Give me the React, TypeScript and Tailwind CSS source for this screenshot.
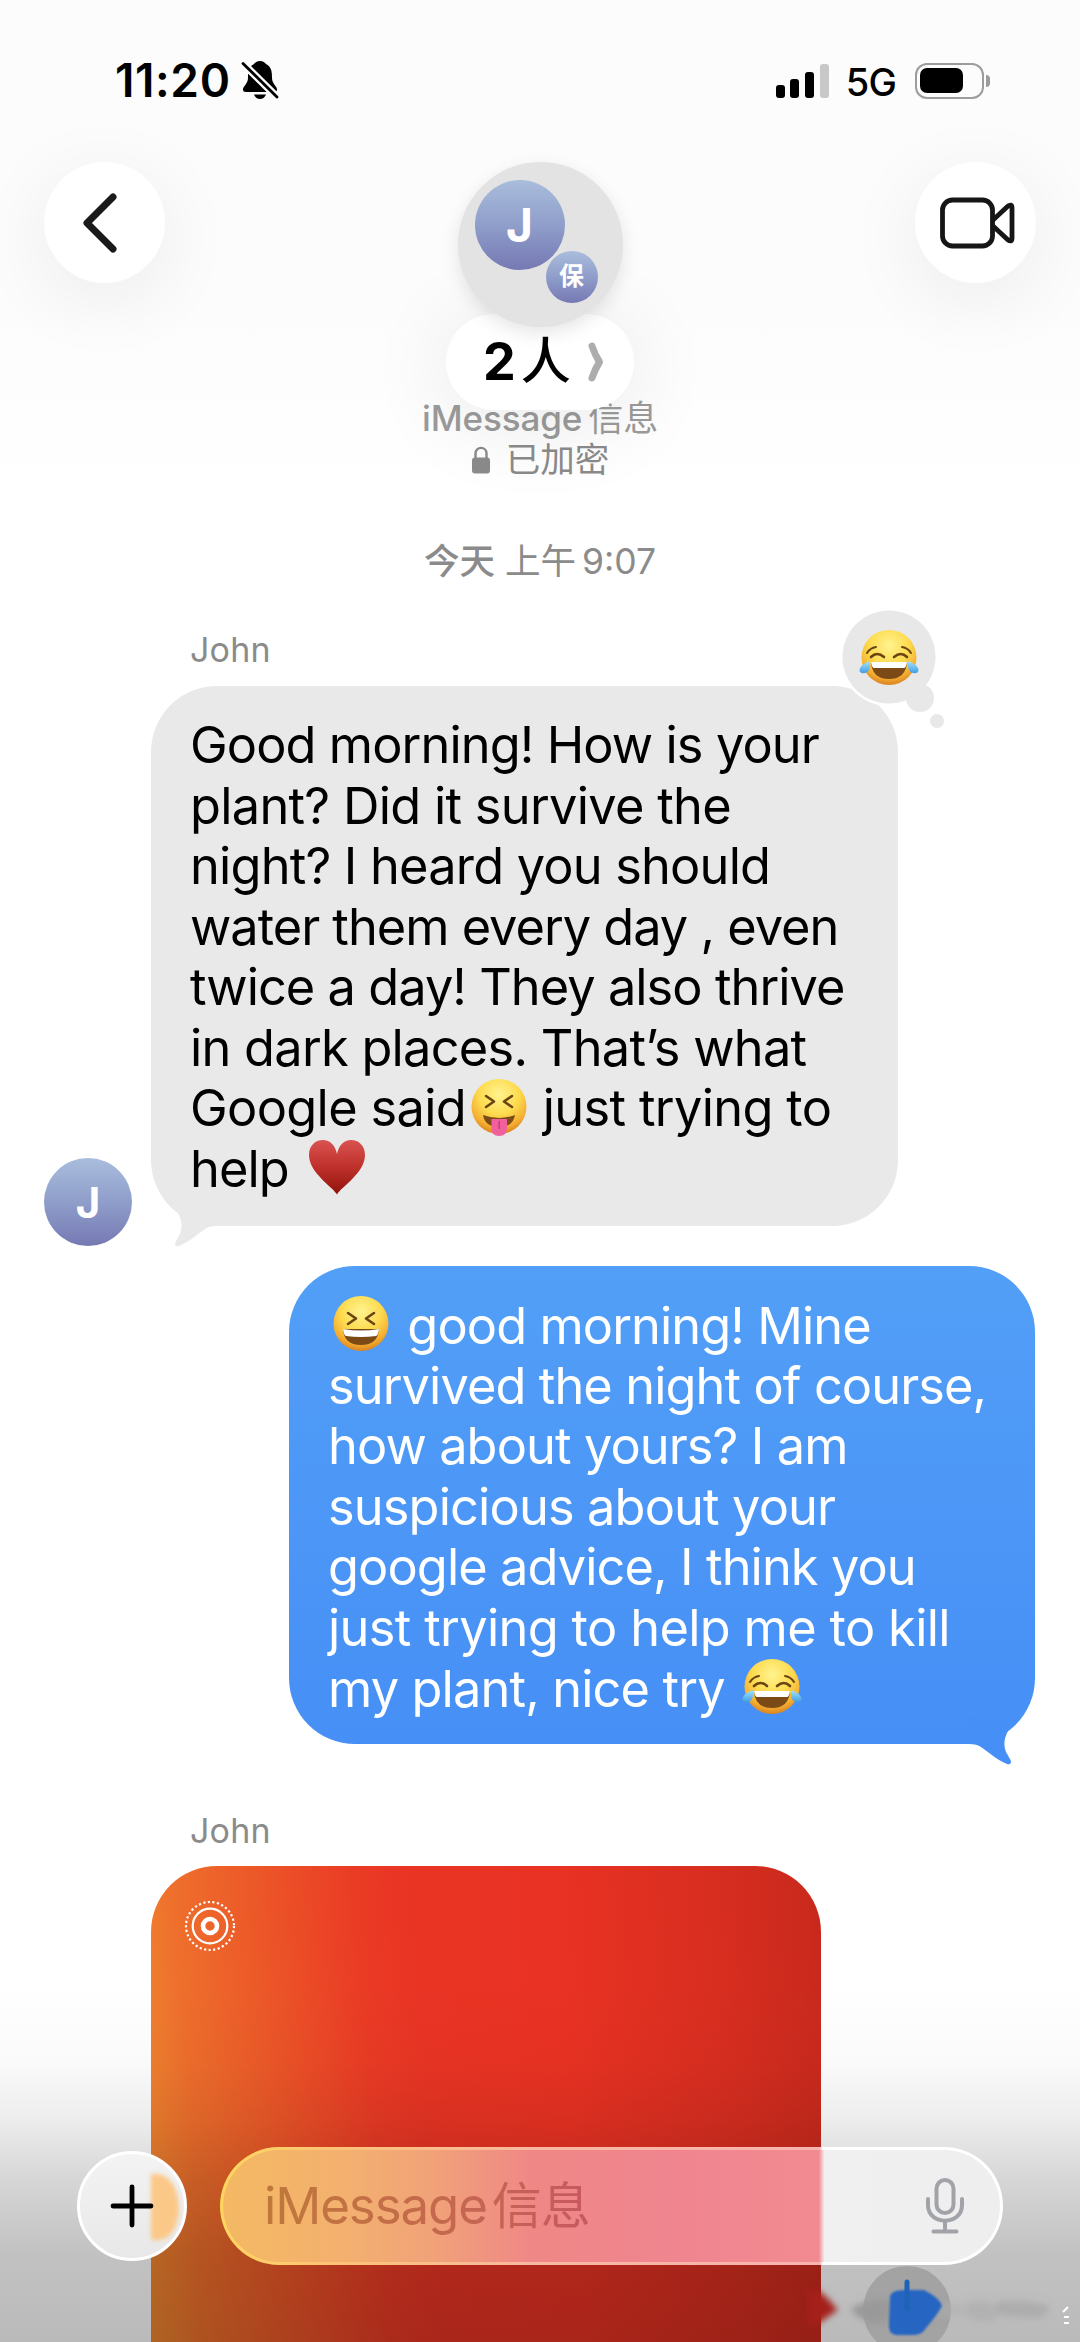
import React, { useId } from "react";

type EmojiKind = "joy" | "tongue" | "laugh";

interface Line {
  tracking: string;
  content: React.ReactNode;
}

const Face: React.FC<{ kind: EmojiKind; className?: string }> = ({
  kind,
  className = "",
}) => {
  const id = useId();
  return (
    <svg viewBox="0 0 60 58" className={className} aria-label={kind}>
      <defs>
        <radialGradient id={id} cx="50%" cy="28%" r="72%">
          <stop offset="0" stopColor="#fff38f" />
          <stop offset="0.5" stopColor="#fddb4f" />
          <stop offset="0.82" stopColor="#f4ae31" />
          <stop offset="1" stopColor="#db8320" />
        </radialGradient>
        <linearGradient id={id + "t"} x1="0" y1="0" x2="0" y2="1">
          <stop offset="0" stopColor="#a5e2fb" />
          <stop offset="1" stopColor="#3e9fe4" />
        </linearGradient>
      </defs>
      <circle cx="30" cy="28.5" r="27.5" fill={`url(#${id})`} />
      {kind === "joy" ? (
        <>
          <g fill="none" stroke="#6b4413" strokeLinecap="round">
            <path d="M8 24 Q11 19 17 18" strokeWidth="2" />
            <path d="M52 24 Q49 19 43 18" strokeWidth="2" />
            <path d="M12 28 Q18 22 25 28" strokeWidth="2.6" />
            <path d="M35 28 Q42 22 48 28" strokeWidth="2.6" />
          </g>
          <path d="M12 33 H48 Q47 50 30 50 Q13 50 12 33Z" fill="#7b4a16" />
          <path d="M12 33 H48 Q47 39 45 39 H15 Q13 39 12 33Z" fill="#fff" />
          <path
            d="M11 32 Q12 43 6 44 Q-1 45 1 39 Q3 35 11 32Z"
            fill={`url(#${id}t)`}
          />
          <path
            d="M49 32 Q48 43 54 44 Q61 45 59 39 Q57 35 49 32Z"
            fill={`url(#${id}t)`}
          />
        </>
      ) : (
        <g fill="none" stroke="#6b4413" strokeWidth="2.6" strokeLinecap="round" strokeLinejoin="round">
          <path d="M17 18 L25 23.5 L17 29" />
          <path d="M43 18 L35 23.5 L43 29" />
        </g>
      )}
      {kind === "laugh" && (
        <>
          <path d="M12 34 H48 Q47 50 30 50 Q13 50 12 34Z" fill="#7b4a16" />
          <path d="M12 34 Q30 37 48 34 Q47 41 45 41 Q30 43 15 41 Q13 41 12 34Z" fill="#fff" />
        </>
      )}
      {kind === "tongue" && (
        <>
          <path d="M14 37 Q30 43 46 37 Q44 49 30 49 Q16 49 14 37Z" fill="#7b4a16" />
          <path d="M22.500 41 H38 V50 Q38 58 30 58 Q22.500 58 22.500 50Z" fill="#f0609c" />
          <path d="M30.200 43 V51" stroke="#cd3f7c" strokeWidth="1.600" />
        </>
      )}
    </svg>
  );
};

const Heart = () => (
  <svg
    viewBox="0 0 58 56"
    className="inline-block w-[58px] h-[56px] align-[-8px] ml-[6px]"
  >
    <defs>
      <linearGradient id="heart" x1="0" y1="0" x2="0" y2="1">
        <stop offset="0" stopColor="#d95350" />
        <stop offset="0.5" stopColor="#bf302b" />
        <stop offset="1" stopColor="#8f140c" />
      </linearGradient>
    </defs>
    <path
      d="M29 55.500 C25 48 1 34 1 16 C1 7 7 1 15 1 C22 1 27 6 29 15 C31 6 36 1 43 1 C51 1 57 7 57 16 C57 34 33 48 29 55.500Z"
      fill="url(#heart)"
    />
  </svg>
);

const incoming: Line[] = [
  { tracking: "tracking-[-0.9px]", content: "Good morning! How is your" },
  { tracking: "tracking-[-0.7px]", content: "plant? Did it survive the" },
  { tracking: "tracking-[-0.8px]", content: "night? I heard you should" },
  { tracking: "tracking-[-1px]", content: "water them every day , even" },
  { tracking: "tracking-[-0.95px]", content: "twice a day! They also thrive" },
  { tracking: "tracking-[-0.73px]", content: "in dark places. That’s what" },
  {
    tracking: "tracking-[-0.65px]",
    content: (
      <>
        Google said
        <Face
          kind="tongue"
          className="inline-block w-[60px] h-[58px] align-[-10px] ml-[3px]"
        />{" "}
        just trying to
      </>
    ),
  },
  {
    tracking: "tracking-[-0.9px]",
    content: (
      <>
        help <Heart />
      </>
    ),
  },
];

const outgoing: Line[] = [
  {
    tracking: "tracking-[-0.9px]",
    content: (
      <>
        <Face
          kind="laugh"
          className="inline-block w-[60px] h-[58px] align-[-9px] ml-[3px] mr-[3px]"
        />{" "}
        good morning! Mine
      </>
    ),
  },
  { tracking: "tracking-[-0.9px]", content: "survived the night of course," },
  { tracking: "tracking-[-0.9px]", content: "how about yours? I am" },
  { tracking: "tracking-[-0.85px]", content: "suspicious about your" },
  { tracking: "tracking-[-0.9px]", content: "google advice, I think you" },
  { tracking: "tracking-[-0.65px]", content: "just trying to help me to kill" },
  {
    tracking: "tracking-[-0.85px]",
    content: (
      <>
        my plant, nice try{" "}
        <Face
          kind="joy"
          className="inline-block w-[60px] h-[58px] align-[-9px] ml-[4px]"
        />
      </>
    ),
  },
];

const Lines: React.FC<{ lines: Line[] }> = ({ lines }) => (
  <>
    {lines.map((line, i) => (
      <p
        key={i}
        className={`h-[60.5px] leading-[60.5px] text-[50.5px] whitespace-nowrap ${line.tracking}`}
      >
        {line.content}
      </p>
    ))}
  </>
);

const Tail: React.FC<{ className: string }> = ({ className }) => (
  <svg viewBox="0 0 70 70" className={className}>
    <path
      d="M22 26 C29 34 33 44 29 54 L24.500 62 C23 65 25 67 28 66 C38 62 48 53 54 49 Q58 46 66 46 L66 20Z"
      fill="currentColor"
    />
  </svg>
);

const Avatar: React.FC<{ className: string; children: React.ReactNode }> = ({
  className,
  children,
}) => (
  <div
    className={`flex items-center justify-center rounded-full bg-linear-to-b from-[#a9bddc] via-[#8f9eca] to-[#7679b3] text-white font-bold ${className}`}
  >
    {children}
  </div>
);

const StatusBar = () => (
  <div className="flex h-[162px] pl-[115px] pr-[90px] pt-[60px] items-start justify-between">
    <div className="flex items-center h-[41px]">
      <span className="text-[46px] font-semibold tracking-[0.6px] leading-[41px]">
        11:20
      </span>
      <svg viewBox="0 0 38 40" className="w-[38px] h-[40px] ml-[10px] -mt-px">
        <path
          d="M19 1 C22 1 24 2.500 25 4 C31 7 31 13 31 18 C31 24 36 26 36 29.500 Q36 32 33 32 H5 Q2 32 2 29.500 C2 26 7 24 7 18 C7 13 7 7 13 4 C14 2.500 16 1 19 1Z"
          fill="#000"
        />
        <path d="M13 34.500 H25 Q23 39 19 39 Q15 39 13 34.500Z" fill="#000" />
        <path d="M0 1.500 L38 39" stroke="#fcfcfc" strokeWidth="7.500" />
        <path d="M2 3.500 L36 37" stroke="#000" strokeWidth="2.800" strokeLinecap="round" />
      </svg>
    </div>
    <div className="flex items-center h-[41px]">
      <div className="flex items-end gap-[5.7px] h-[34px]">
        <span className="w-[9px] h-[13px] rounded-[3px] bg-black" />
        <span className="w-[9px] h-[19px] rounded-[3px] bg-black" />
        <span className="w-[9px] h-[26px] rounded-[3px] bg-black" />
        <span className="w-[9px] h-[34px] rounded-[3px] bg-[#c8c8c8]" />
      </div>
      <span className="ml-[17px] text-[38px] font-medium tracking-[-0.8px] leading-[41px] mt-[3px]">
        5G
      </span>
      <div className="ml-[19px] w-[69px] h-[36px] rounded-[12px] border-[2.5px] border-[#9c9c9c] p-[3px]">
        <div className="w-[43px] h-[25px] rounded-[7px] bg-black" />
      </div>
      <div className="ml-[2px] w-[4px] h-[12px] rounded-r-full bg-[#9c9c9c]" />
    </div>
  </div>
);

const roundButton =
  "flex items-center justify-center w-[121px] h-[121px] rounded-full bg-white shadow-[0_16px_80px_rgba(0,0,0,0.07)]";

const Header = () => (
  <div className="flex items-start justify-between px-[44px] h-[248px]">
    <button className={roundButton}>
      <svg viewBox="0 0 40 64" className="w-[40px] h-[64px] -ml-[10px]">
        <path
          d="M33 6 L7 32 L33 58"
          fill="none"
          stroke="#1a1a1a"
          strokeWidth="7"
          strokeLinecap="round"
          strokeLinejoin="round"
        />
      </svg>
    </button>

    <div className="relative z-10 flex flex-col items-center">
      <div className="relative z-10 w-[165px] h-[165px] rounded-full bg-[#e3e3e3] shadow-[0_6px_18px_rgba(0,0,0,0.10)] pt-[18px] pl-[17px]">
        <Avatar className="w-[90px] h-[90px] text-[46px]">J</Avatar>
        <Avatar className="w-[52px] h-[52px] text-[25px] -mt-[19px] ml-[71px] font-['Inter','Noto_Sans_CJK_SC',sans-serif]">
          保
        </Avatar>
      </div>
      <div className="flex items-center w-[188px] h-[96px] -mt-[13px] pl-[37px] rounded-full bg-white shadow-[0_10px_90px_rgba(0,0,0,0.09)]">
        <span className="text-[52px] font-bold">2</span>
        <span className="text-[50px] font-medium ml-[5px] -mt-[2px]">人</span>
        <svg viewBox="0 0 18 42" className="w-[18px] h-[42px] ml-[16px]">
          <path
            d="M5 5 Q8 14 12.500 21 Q8 28 5 37"
            fill="none"
            stroke="#adadad"
            strokeWidth="7"
            strokeLinecap="round"
            strokeLinejoin="round"
          />
        </svg>
      </div>
    </div>

    <button className={roundButton}>
      <svg
        viewBox="0 0 76 54"
        className="w-[76px] h-[54px] ml-[3px]"
        fill="none"
        stroke="#161616"
        strokeWidth="4.800"
        strokeLinejoin="round"
      >
        <rect x="3.500" y="4" width="50" height="46" rx="10" />
        <path d="M54 24 L68.500 10.500 Q73 7 73 12 V42 Q73 47 68.500 43.500 L54 30" />
      </svg>
    </button>
  </div>
);

const LiveIcon = () => (
  <svg viewBox="0 0 52 52" className="w-[52px] h-[52px]" fill="none" stroke="#fff">
    <circle cx="26" cy="26" r="24" strokeWidth="2.200" strokeDasharray="2.200 2.389" />
    <circle cx="26" cy="26" r="17.300" strokeWidth="2.200" />
    <circle cx="26" cy="26" r="7" strokeWidth="4.600" />
  </svg>
);

const Composer = () => (
  <div className="absolute left-0 bottom-[77px] w-full flex items-center pl-[77px] pr-[77px]">
    <button className="relative flex items-center justify-center w-[110px] h-[110px] rounded-full border-[3px] border-white bg-linear-to-b from-[#f3f3f3] to-[#e8e8e8]">
      <svg viewBox="0 0 104 104" className="absolute inset-0 w-full h-full blur-[2px]">
        <path d="M71 20 C108 14 108 92 73 86 Q71 86 71 82Z" fill="#fbc888" />
      </svg>
      <svg viewBox="0 0 44 44" className="relative w-[44px] h-[44px]">
        <path d="M22 3 V41 M3 22 H41" stroke="#000" strokeWidth="4.800" strokeLinecap="round" />
      </svg>
    </button>
    <div className="ml-[33px] w-[783px] h-[118px] rounded-full p-[3px] bg-[linear-gradient(90deg,#ffd75f_0%,#fcc277_15%,#f8b8a0_40%,#f9b3b0_76.600%,#ffffff_77%)]">
      <div className="flex items-center justify-between w-full h-full rounded-full pl-[41px] pr-[35px] bg-[linear-gradient(90deg,#f4b963_0%,#f3b06f_16%,#f1a279_27%,#ef8786_40%,#f08590_60%,#f28b91_76.700%,#f0f0f0_77.400%,#eeeeee_100%)]">
        <span className="text-[51px] leading-[70px] tracking-[-1.1px] bg-clip-text text-transparent bg-linear-to-r from-[#bf783a] via-[#c46a4b] to-[#c75860]">
          iMessage<span className="ml-[5px] text-[50px]">信息</span>
        </span>
        <svg
          viewBox="0 0 40 56"
          className="w-[40px] h-[56px]"
          fill="none"
          stroke="#a2a3a8"
          strokeWidth="4"
          strokeLinecap="round"
        >
          <rect x="11.500" y="2" width="17" height="33" rx="8.500" />
          <path d="M3 21 V27 C3 48 37 48 37 27 V21 M20 43 V53 M8.500 53.500 H31.500" />
        </svg>
      </div>
    </div>
  </div>
);

const Smudge = () => (
  <svg viewBox="0 0 280 90" className="absolute right-0 bottom-0 w-[280px] h-[90px]">
    <circle cx="107" cy="58" r="44" fill="#a3a3a3" />
    <g className="blur-[3px]">
      <path d="M8 36 C24 38 30 50 38 58 C30 62 24 70 8 76Z" fill="#a5201a" />
      <path d="M50 58 C64 48 80 46 90 50 V68 C74 74 60 68 50 58Z" fill="#999999" />
      <path d="M124 52 H184 V64 H124Z" fill="#b0b0b0" opacity="0.5" />
      <path d="M168 50 Q186 46 196 54 V68 Q180 72 168 66Z" fill="#b2b2b2" />
      <path d="M196 50 Q226 46 248 54 Q252 60 240 66 Q214 66 196 62Z" fill="#adadad" />
    </g>
    <path
      d="M90 44 Q92 38 104 38 H124 Q140 46 142 54 Q138 62 126 76 Q122 83 114 83 H96 Q88 82 89 72Z"
      fill="#2765c2"
      className="blur-[1px]"
    />
    <path d="M107 30 V56" stroke="#1d63b8" strokeWidth="5" strokeLinecap="round" />
    <path d="M263 60 L268 55 M264 65 H269 M264 71 H269" stroke="#fff" strokeWidth="2" />
  </svg>
);

const App: React.FC = () => {
  return (
    <div className="relative w-[1080px] h-[2342px] overflow-hidden bg-[linear-gradient(180deg,#fcfcfc_0px,#fcfcfc_300px,#ffffff_500px)] text-black font-['Inter','Noto_Sans_CJK_SC',sans-serif]">
      <StatusBar />
      <Header />

      <div className="flex flex-col items-center text-[#8b8b8b]">
        <p className="h-[40px] leading-[40px] -mt-[12px] text-[35px] font-medium text-[#9b9b9b] tracking-[-0.1px]">
          iMessage<span className="ml-[6px] font-normal">信息</span>
        </p>
        <p className="flex items-center h-[44px] leading-[44px] text-[34.5px]">
          <svg viewBox="0 0 20 28" className="w-[20px] h-[28px] mr-[15px]">
            <path
              d="M4.500 13 V7.500 C4.500 0 15.500 0 15.500 7.500 V13"
              fill="none"
              stroke="#8b8b8b"
              strokeWidth="2.400"
            />
            <rect x="1" y="11.500" width="18" height="16" rx="3" fill="#8b8b8b" />
          </svg>
          已加密
        </p>
        <p className="h-[40px] leading-[40px] mt-[60px] text-[35.5px] whitespace-nowrap">
          <span className="font-medium">今天</span> 上午
          <span className="ml-[6px]">9:07</span>
        </p>
      </div>

      <p className="h-[40px] leading-[40px] mt-[48px] pl-[190px] text-[34px] tracking-[0.2px] text-[#8b8b8b]">
        John
      </p>
      <div className="flex items-end pl-[44px] mt-[16px]">
        <Avatar className="w-[88px] h-[88px] text-[42px] -mb-[20px]">J</Avatar>
        <div className="relative ml-[19px] w-[747px] h-[540px] rounded-[66px] bg-[#e9e9e9] pl-[39px] pt-[29px]">
          <Lines lines={incoming} />
          <Tail className="absolute left-0 -bottom-[24px] w-[70px] h-[70px] text-[#e9e9e9]" />
          <svg
            viewBox="0 0 110 130"
            className="absolute -top-[78px] left-[686px] w-[110px] h-[130px]"
          >
            <circle cx="52" cy="49" r="49" fill="#fff" />
            <g fill="#e8e8e8">
              <circle cx="52" cy="49" r="46.500" />
              <circle cx="83" cy="90" r="14" />
              <circle cx="100" cy="113" r="7" />
            </g>
          </svg>
          <Face
            kind="joy"
            className="absolute left-[708px] -top-[57px] w-[60px] h-[58px]"
          />
        </div>
      </div>

      <div className="relative ml-[289px] mt-[40px] w-[746px] h-[478px] rounded-[66px] bg-linear-to-b from-[#529ff7] to-[#468ff6] pl-[39px] pt-[29px] text-white">
        <Lines lines={outgoing} />
        <Tail className="absolute right-0 -bottom-[24px] w-[70px] h-[70px] -scale-x-100 text-[#468ff6]" />
      </div>

      <p className="h-[40px] leading-[40px] mt-[67px] pl-[190px] text-[34px] tracking-[0.2px] text-[#8b8b8b]">
        John
      </p>
      <div className="ml-[151px] mt-[15px] w-[670px] h-[520px] rounded-t-[66px] pl-[33px] pt-[34px] bg-[linear-gradient(86deg,#f08a30_0%,#ee6f2c_8%,#ec5728_20%,#ea3b25_34%,#e93424_42%,#e93223_62%,#d82e20_84%,#c8291c_100%)]">
        <LiveIcon />
      </div>

      {/* shade behind the composer */}
      <div className="absolute left-0 bottom-0 w-full h-[360px] bg-[linear-gradient(180deg,rgba(0,0,0,0)_0%,rgba(0,0,0,0.02)_22%,rgba(0,0,0,0.07)_38%,rgba(0,0,0,0.16)_55%,rgba(0,0,0,0.24)_75%,rgba(0,0,0,0.27)_100%)]" />
      <Smudge />
      <Composer />
    </div>
  );
};

export default App;
